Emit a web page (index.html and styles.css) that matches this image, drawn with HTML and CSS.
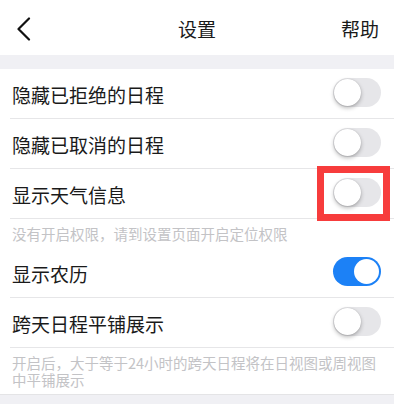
FILE: index.html
```html
<!DOCTYPE html>
<html lang="zh-CN">
<head>
<meta charset="utf-8">
<link rel="stylesheet" href="styles.css">
</head>
<body>
<div class="page">
  <header class="bar">
    <svg class="back" width="16" height="24" viewBox="0 0 16 24"><path d="M13 1.5 L2.5 12 L13 22.5" fill="none" stroke="#111" stroke-width="2.2" stroke-linecap="round" stroke-linejoin="round"/></svg>
    <div class="title">设置</div>
    <div class="help">帮助</div>
  </header>
  <div class="gap"></div>
  <section class="group">
    <div class="item"><span class="label">隐藏已拒绝的日程</span><span class="switch"><span class="knob"></span></span></div>
    <div class="item"><span class="label">隐藏已取消的日程</span><span class="switch"><span class="knob"></span></span></div>
    <div class="item"><span class="label">显示天气信息</span><span class="switch marked"><span class="knob"></span><span class="mark"></span></span></div>
    <div class="note">没有开启权限，请到设置页面开启定位权限</div>
    <div class="item"><span class="label">显示农历</span><span class="switch on"><span class="knob"></span></span></div>
    <div class="item"><span class="label">跨天日程平铺展示</span><span class="switch"><span class="knob"></span></span></div>
    <div class="note last">开启后，大于等于24小时的跨天日程将在日视图或周视图中平铺展示</div>
  </section>
</div>
</body>
</html>
```
FILE: styles.css
```css
* { box-sizing: border-box; }
html, body { margin: 0; padding: 0; }
body {
  background: #f0f0f4;
  font-family: "Noto Sans CJK SC", "Noto Sans", sans-serif;
  color: #1a1a1a;
  width: 394px;
  height: 404px;
  overflow: hidden;
}
.bar {
  height: 55px;
  background: #fff;
  display: flex;
  align-items: center;
  justify-content: space-between;
  padding: 2px 15px 0 16px;
  position: relative;
}
.back { display: block; }
.title {
  position: absolute;
  left: 0; right: 0;
  text-align: center;
  font-size: 19px;
  line-height: 26px;
  pointer-events: none;
}
.help { font-size: 19px; line-height: 26px; }
.gap { height: 14px; }
.group {
  background: #fff;
  border-bottom: 1px solid #e4e4e6;
}
.item {
  height: 50px;
  margin-left: 10px;
  padding: 2px 13px 0 2px;
  border-bottom: 1px solid #e6e6e8;
  display: flex;
  align-items: center;
  justify-content: space-between;
}
.label { font-size: 19px; line-height: 26px; }
.switch {
  position: relative;
  width: 48px;
  height: 29px;
  border-radius: 15px;
  background: #e6e6e9;
  margin-top: -4px;
  flex: none;
}
.knob {
  position: absolute;
  left: 1px; top: 1px;
  width: 27px; height: 27px;
  border-radius: 50%;
  background: #fff;
  box-shadow: 0 2px 4px rgba(0,0,0,0.28), 0 0 1px rgba(0,0,0,0.2);
}
.switch.on { background: #1c81f6; }
.switch.on .knob {
  left: auto; right: 2px; top: 2px;
  width: 25px; height: 25px;
  box-shadow: none;
}
.mark {
  position: absolute;
  left: -16px; top: -12px;
  width: 73px; height: 55px;
  border: 7px solid #f73c3c;
}
.note {
  font-size: 14.5px;
  line-height: 17px;
  color: #c3c3c6;
  padding: 6px 12px 6px 12px;
}
.note.last { padding-bottom: 6px; }
```
